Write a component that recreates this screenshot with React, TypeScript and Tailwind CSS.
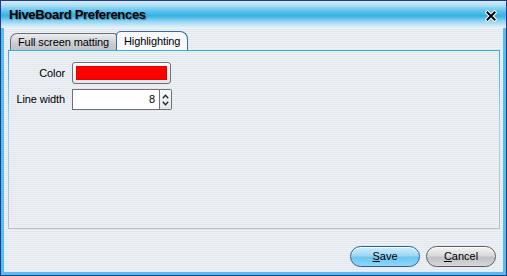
import React from "react";

const stripes =
  "bg-[repeating-linear-gradient(to_bottom,#eef2f5_0px,#eef2f5_1px,#e1e7ed_1px,#e1e7ed_2px)]";

export default function App() {
  return (
    <div
      className="w-[507px] h-[276px] border border-[#1c3d8c] flex flex-col overflow-hidden"
      style={{ fontFamily: '"Liberation Sans", Arial, sans-serif' }}
    >
      <div className="flex-1 flex flex-col border-x-[3px] border-b-[3px] border-[#56bdec]">
        {/* Title bar */}
        <div className="h-[27px] -mx-[3px] px-[3px] flex items-center bg-[linear-gradient(to_bottom,#d6eef9_0px,#b2e0f5_4px,#52bfeb_11px,#35b1e5_15px,#8fd2f1_20px,#dcf0f9_26px)]">
          <div
            className="pl-[5px] pt-[1px] text-[13px] font-bold text-black flex-1 tracking-[-0.3px]"
            style={{ textShadow: "1px 1px 1px rgba(40,90,130,0.55)" }}
          >
            HiveBoard Preferences
          </div>
          <svg width="12" height="12" viewBox="0 0 12 12" className="mr-[6px] mt-[2px]">
            <path d="M2.5 2.5 L9.5 9.5 M9.5 2.5 L2.5 9.5" stroke="#ffffff" strokeWidth="4" strokeLinecap="square" />
            <path d="M2.5 2.5 L9.5 9.5 M9.5 2.5 L2.5 9.5" stroke="#000000" strokeWidth="2" strokeLinecap="square" />
          </svg>
        </div>

        {/* Body */}
        <div className={`flex-1 flex flex-col pt-[3px] pl-[4px] pr-[3px] ${stripes}`}>
          {/* Tabs */}
          <div className="h-[19px] flex items-end pl-[2px] text-[11px] text-black tracking-[-0.1px]">
            <div className="h-[17px] w-[107px] rounded-tl-[7px] rounded-tr-[3px] border border-b-0 border-[#6c7178] bg-[linear-gradient(to_bottom,#eceef0,#c9cdd2_60%,#bfc4c9)] flex items-center pl-[7px] pt-[1px]">
              Full screen matting
            </div>
            <div className="h-[19px] w-[72px] -ml-[1px] rounded-tl-[5px] rounded-tr-[8px] border border-b-0 border-[#3b66ad] bg-[#f6f8fa] flex items-center pl-[7px] pt-[1px]">
              Highlighting
            </div>
          </div>

          {/* Panel */}
          <div className="h-[179px] p-[1px] bg-[linear-gradient(to_bottom,#2db0e6,#a9cfe2_40%,#b9c0c8)]">
            <div className={`h-full pt-[11px] ${stripes}`}>
              <div className="grid grid-cols-[56px_auto] gap-x-[7px] gap-y-[5px] items-center text-[11px] text-black tracking-[-0.1px]">
                <div className="text-right">Color</div>
                <div className="w-[99px] h-[22px] rounded-[3px] border border-[#6e7278] bg-[linear-gradient(to_bottom,#fbfcfd,#e3e6ea)] p-[3px]">
                  <div className="w-full h-full bg-[#ff0000] border border-[#b00000]/30" />
                </div>
                <div className="text-right">Line width</div>
                <div className="flex h-[21px] w-[100px]">
                  <div className="w-[88px] h-full border border-[#6e7278] bg-white flex items-center justify-end pr-[4px]">
                    8
                  </div>
                  <div className="w-[12px] h-full border border-l-0 border-[#6e7278] rounded-r-[2px] bg-[linear-gradient(to_bottom,#f8f9fa,#e4e7ea)] flex flex-col items-center justify-center gap-[2px]">
                    <svg width="7" height="5" viewBox="0 0 7 5">
                      <path d="M0.8 4.2 L3.5 1.2 L6.2 4.2" stroke="#222" strokeWidth="1.3" fill="none" />
                    </svg>
                    <svg width="7" height="5" viewBox="0 0 7 5">
                      <path d="M0.8 0.8 L3.5 3.8 L6.2 0.8" stroke="#222" strokeWidth="1.3" fill="none" />
                    </svg>
                  </div>
                </div>
              </div>
            </div>
          </div>

          {/* Buttons */}
          <div className="mt-[17px] flex justify-end gap-[6px] pr-[4px] text-[11px] text-black">
            <div className="w-[70px] h-[21px] rounded-full border border-[#2a5d9e] bg-[linear-gradient(to_bottom,#d3eefb,#9fd8f4_45%,#6cc6f0_55%,#8fd6f6)] flex items-center justify-center shadow-[inset_0_1px_0_rgba(255,255,255,0.8)]">
              <span>
                <span className="underline">S</span>ave
              </span>
            </div>
            <div className="w-[70px] h-[21px] rounded-full border border-[#5a5d62] bg-[linear-gradient(to_bottom,#f4f4f5,#d9dadc_45%,#bfc1c4_55%,#d6d8da)] flex items-center justify-center shadow-[inset_0_1px_0_rgba(255,255,255,0.8)]">
              <span>
                <span className="underline">C</span>ancel
              </span>
            </div>
          </div>
        </div>
      </div>
    </div>
  );
}
